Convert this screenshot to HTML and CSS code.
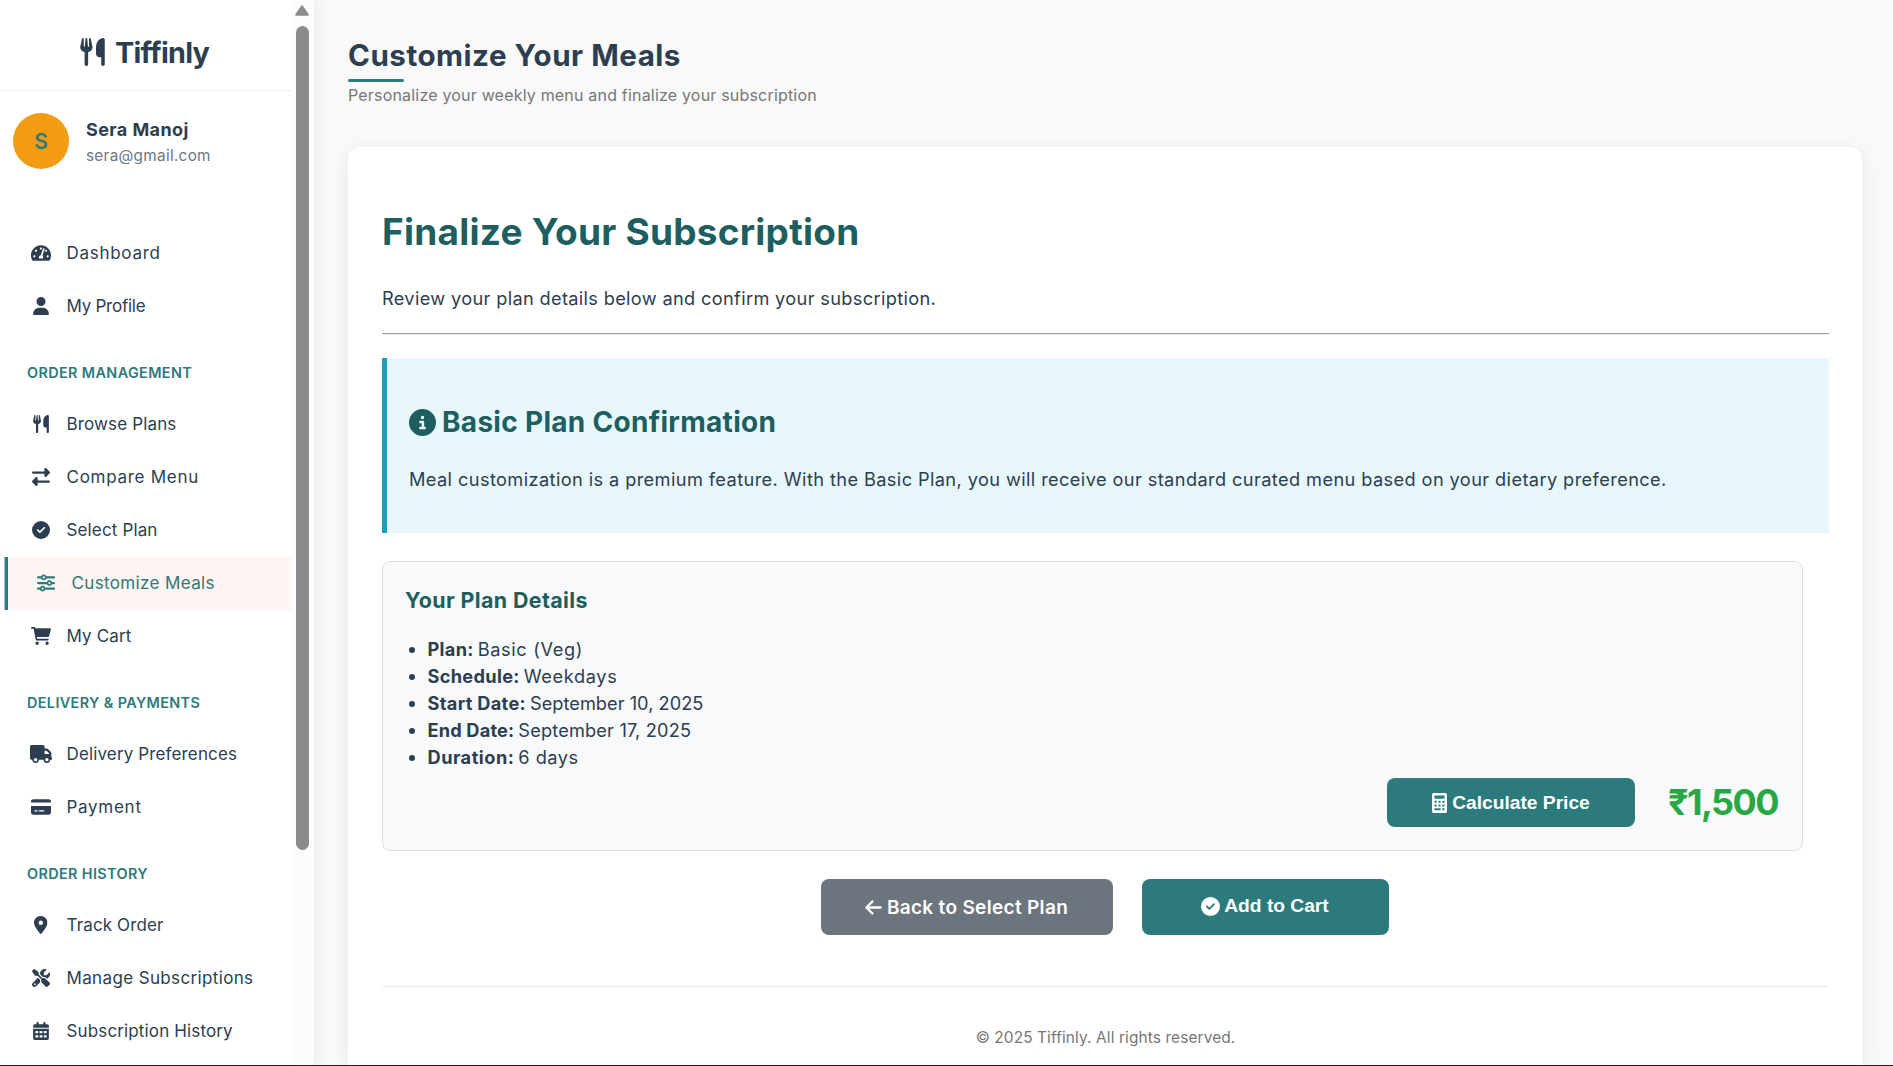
FILE: index.html
```html
<!DOCTYPE html>
<html lang="en">
<head>
<meta charset="utf-8">
<title>Customize Your Meals - Tiffinly</title>
<link rel="stylesheet" href="styles.css">
</head>
<body>
<svg class="sprite" aria-hidden="true">
  <symbol id="utensils" viewBox="0 0 448 512"><path d="M416 0C400 0 288 32 288 176V288c0 35.3 28.7 64 64 64h32V480c0 17.7 14.3 32 32 32s32-14.3 32-32V352 240 32c0-17.7-14.3-32-32-32zM64 16C64 7.8 57.9 1 49.7 .1S34.2 4.6 32.4 12.5L2.1 148.8C.7 155.1 0 161.5 0 167.9c0 45.9 35.1 83.6 80 87.7V480c0 17.7 14.3 32 32 32s32-14.3 32-32V255.6c44.9-4.1 80-41.8 80-87.7c0-6.4-.7-12.8-2.1-19.1L191.6 12.5c-1.8-8-9.3-13.3-17.4-12.4S160 7.8 160 16V150.2c0 5.4-4.4 9.8-9.8 9.8c-5.1 0-9.3-3.9-9.8-9L127.9 14.6C127.2 6.3 120.3 0 112 0s-15.2 6.3-15.9 14.6L83.7 151c-.5 5.1-4.7 9-9.8 9c-5.4 0-9.8-4.4-9.8-9.8V16z"/></symbol>
  <symbol id="gauge" viewBox="0 0 576 512"><path d="M288 32C128.94 32 0 160.94 0 320c0 52.8 14.25 102.26 39.06 144.8 5.61 9.62 16.3 15.2 27.44 15.2h443c11.14 0 21.83-5.58 27.44-15.2C561.75 422.26 576 372.8 576 320c0-159.06-128.94-288-288-288zm0 64c14.71 0 26.58 10.13 30.32 23.65-1.11 2.26-2.64 4.23-3.45 6.67l-9.22 27.67c-5.13 3.49-10.97 6.01-17.64 6.01-17.67 0-32-14.33-32-32S270.33 96 288 96zM96 384c-17.67 0-32-14.33-32-32s14.33-32 32-32 32 14.33 32 32-14.33 32-32 32zm48-160c-17.67 0-32-14.33-32-32s14.33-32 32-32 32 14.33 32 32-14.33 32-32 32zm246.77-72.41l-61.33 184C343.13 347.33 352 364.54 352 384c0 11.72-3.38 22.55-8.88 32H232.88c-5.5-9.45-8.88-20.28-8.88-32 0-33.94 26.5-61.43 59.9-63.59l61.34-184.01c4.17-12.56 17.73-19.45 30.36-15.17 12.57 4.19 19.35 17.79 15.17 30.36zm14.66 57.2l15.52-46.55c3.47-1.29 7.13-2.23 11.05-2.23 17.67 0 32 14.33 32 32s-14.33 32-32 32c-11.38-.01-20.89-6.28-26.57-15.22zM480 384c-17.67 0-32-14.33-32-32s14.33-32 32-32 32 14.33 32 32-14.33 32-32 32z"/></symbol>
  <symbol id="user" viewBox="0 0 448 512"><path d="M224 256A128 128 0 1 0 224 0a128 128 0 1 0 0 256zm-45.7 48C79.8 304 0 383.8 0 482.3C0 498.7 13.3 512 29.7 512H418.3c16.4 0 29.7-13.3 29.7-29.7C448 383.8 368.2 304 269.7 304H178.3z"/></symbol>
  <symbol id="exchange" viewBox="0 0 512 512"><path d="M32 96l320 0V32c0-12.9 7.8-24.6 19.8-29.6s25.7-2.2 34.9 6.9l96 96c6 6 9.4 14.1 9.4 22.6s-3.4 16.6-9.4 22.6l-96 96c-9.2 9.2-22.9 11.9-34.9 6.9s-19.8-16.6-19.8-29.6V160L32 160c-17.7 0-32-14.3-32-32s14.3-32 32-32zM480 352c17.7 0 32 14.3 32 32s-14.3 32-32 32H160v64c0 12.9-7.8 24.6-19.8 29.6s-25.7 2.2-34.9-6.9l-96-96c-6-6-9.4-14.1-9.4-22.6s3.4-16.6 9.4-22.6l96-96c9.2-9.2 22.9-11.9 34.9-6.9s19.8 16.6 19.8 29.6l0 64H480z"/></symbol>
  <symbol id="check" viewBox="0 0 512 512"><path d="M256 512A256 256 0 1 0 256 0a256 256 0 1 0 0 512zM369 209L241 337c-9.4 9.4-24.6 9.4-33.9 0l-64-64c-9.4-9.4-9.4-24.6 0-33.9s24.6-9.4 33.9 0l47 47L335 175c9.4-9.4 24.6-9.4 33.9 0s9.4 24.6 0 33.9z"/></symbol>
  <symbol id="sliders" viewBox="0 0 512 512"><path d="M0 416c0 17.7 14.3 32 32 32l54.7 0c12.3 28.3 40.5 48 73.3 48s61-19.7 73.3-48L480 448c17.7 0 32-14.3 32-32s-14.3-32-32-32l-246.7 0c-12.3-28.3-40.5-48-73.3-48s-61 19.7-73.3 48L32 384c-17.7 0-32 14.3-32 32zm128 0a32 32 0 1 1 64 0 32 32 0 1 1 -64 0zM320 256a32 32 0 1 1 64 0 32 32 0 1 1 -64 0zm32-80c-32.8 0-61 19.7-73.3 48L32 224c-17.7 0-32 14.3-32 32s14.3 32 32 32l246.7 0c12.3 28.3 40.5 48 73.3 48s61-19.7 73.3-48l54.7 0c17.7 0 32-14.3 32-32s-14.3-32-32-32l-54.7 0c-12.3-28.3-40.5-48-73.3-48zM192 128a32 32 0 1 1 0-64 32 32 0 1 1 0 64zm73.3-64C253 35.7 224.8 16 192 16s-61 19.7-73.3 48L32 64C14.3 64 0 78.3 0 96s14.3 32 32 32l86.7 0c12.3 28.3 40.5 48 73.3 48s61-19.7 73.3-48L480 128c17.7 0 32-14.3 32-32s-14.3-32-32-32L265.3 64z"/></symbol>
  <symbol id="cart" viewBox="0 0 576 512"><path d="M0 24C0 10.7 10.7 0 24 0H96c11.5 0 21.4 8.2 23.6 19.5L122 32H541.8c21.2 0 36.5 20.3 30.8 40.7l-53.6 192c-3.9 13.8-16.4 23.3-30.8 23.3H170.7l9.2 48H488c13.3 0 24 10.7 24 24s-10.7 24-24 24H160c-11.5 0-21.4-8.2-23.6-19.5L76.1 48H24C10.7 48 0 37.3 0 24zM128 464a48 48 0 1 1 96 0 48 48 0 1 1 -96 0zm336-48a48 48 0 1 1 0 96 48 48 0 1 1 0-96z"/></symbol>
  <symbol id="truck" viewBox="0 0 640 512"><path d="M48 0C21.5 0 0 21.5 0 48V368c0 26.5 21.5 48 48 48H64c0 53 43 96 96 96s96-43 96-96H384c0 53 43 96 96 96s96-43 96-96h32c17.7 0 32-14.3 32-32s-14.3-32-32-32V288 256 237.3c0-17-6.7-33.3-18.7-45.3L512 114.7c-12-12-28.3-18.7-45.3-18.7H416V48c0-26.5-21.5-48-48-48H48zM416 160h50.7L544 237.3V256H416V160zM112 416a48 48 0 1 1 96 0 48 48 0 1 1 -96 0zm368-48a48 48 0 1 1 0 96 48 48 0 1 1 0-96z"/></symbol>
  <symbol id="card" viewBox="0 0 576 512"><path d="M64 32C28.7 32 0 60.7 0 96v32H576V96c0-35.3-28.7-64-64-64H64zM576 224H0V416c0 35.3 28.7 64 64 64H512c35.3 0 64-28.7 64-64V224zM112 352h64c8.8 0 16 7.2 16 16s-7.2 16-16 16H112c-8.8 0-16-7.2-16-16s7.2-16 16-16zm112 16c0-8.8 7.2-16 16-16H368c8.8 0 16 7.2 16 16s-7.2 16-16 16H240c-8.8 0-16-7.2-16-16z"/></symbol>
  <symbol id="pin" viewBox="0 0 384 512"><path d="M215.7 499.2C267 435 384 279.4 384 192C384 86 298 0 192 0S0 86 0 192c0 87.4 117 243 168.3 307.2c12.3 15.3 35.1 15.3 47.4 0zM192 128a64 64 0 1 1 0 128 64 64 0 1 1 0-128z"/></symbol>
  <symbol id="tools" viewBox="0 0 512 512"><path d="M78.6 5C69.1-2.4 55.6-1.5 47 7L7 47c-8.5 8.5-9.4 22-2.1 31.6l80 104c4.5 5.9 11.6 9.4 19 9.4h54.1l109 109c-14.7 29-10 65.4 14.3 89.6l112 112c12.5 12.5 32.8 12.5 45.3 0l64-64c12.5-12.5 12.5-32.8 0-45.3l-112-112c-24.2-24.2-60.6-29-89.6-14.3l-109-109V104c0-7.5-3.5-14.5-9.4-19L78.6 5zM19.9 396.1C7.2 408.8 0 426.1 0 444.1C0 481.6 30.4 512 67.9 512c18 0 35.3-7.2 48-19.9L233.7 374.3c-7.8-20.9-9-43.6-3.6-65.1l-61.7-61.7L19.9 396.1zM512 144c0-10.5-1.1-20.7-3.2-30.5c-2.4-11.2-16.1-14.1-24.2-6l-63.9 63.9c-3 3-7.1 4.7-11.3 4.7H352c-8.8 0-16-7.2-16-16V102.6c0-4.2 1.7-8.3 4.7-11.3l63.9-63.9c8.1-8.1 5.2-21.8-6-24.2C388.7 1.1 378.5 0 368 0C288.5 0 224 64.5 224 144l0 .8 85.3 85.3c36-9.1 75.8 .5 104 28.7L429 274.5c49-23 83-72.8 83-130.5zM56 432a24 24 0 1 1 48 0 24 24 0 1 1 -48 0z"/></symbol>
  <symbol id="calendar" viewBox="0 0 448 512"><path fill-rule="evenodd" d="M128 0c17.7 0 32 14.3 32 32V64H288V32c0-17.7 14.3-32 32-32s32 14.3 32 32V64h48c26.5 0 48 21.5 48 48v48H0V112C0 85.5 21.5 64 48 64H96V32c0-17.7 14.3-32 32-32zM0 192H448V464c0 26.5-21.5 48-48 48H48c-26.5 0-48-21.5-48-48V192zM64 256v64h80v-64zM184 256v64h80v-64zM304 256v64h80v-64zM64 376v64h80v-64zM184 376v64h80v-64zM304 376v64h80v-64z"/></symbol>
  <symbol id="info" viewBox="0 0 512 512"><path d="M256 512A256 256 0 1 0 256 0a256 256 0 1 0 0 512zM216 336h24V272H216c-13.3 0-24-10.7-24-24s10.7-24 24-24h48c13.3 0 24 10.7 24 24v88h8c13.3 0 24 10.7 24 24s-10.7 24-24 24H216c-13.3 0-24-10.7-24-24s10.7-24 24-24zm40-208a32 32 0 1 1 0 64 32 32 0 1 1 0-64z"/></symbol>
  <symbol id="calculator" viewBox="0 0 384 512"><path fill-rule="evenodd" d="M48 0H336a48 48 0 0 1 48 48V464a48 48 0 0 1-48 48H48a48 48 0 0 1-48-48V48a48 48 0 0 1 48-48zM64 64v80H320V64zM64 196v52h56v-52zM164 196v52h56v-52zM264 196v52h56v-52zM64 292v52h56v-52zM164 292v52h56v-52zM264 292v52h56v-52zM64 388v52h156v-52zM264 388v52h56v-52z"/></symbol>
  <symbol id="arrow-left" viewBox="0 0 448 512"><path d="M9.4 233.4c-12.5 12.5-12.5 32.8 0 45.3l160 160c12.5 12.5 32.8 12.5 45.3 0s12.5-32.8 0-45.3L109.2 288 416 288c17.7 0 32-14.3 32-32s-14.3-32-32-32l-306.7 0L214.6 118.6c12.5-12.5 12.5-32.8 0-45.3s-32.8-12.5-45.3 0l-160 160z"/></symbol>
</svg>

<div class="layout">
  <aside class="sidebar">
    <div class="sidebar-content">
      <div class="brand"><svg class="brand-icon"><use href="#utensils"/></svg><span>Tiffinly</span></div>
      <div class="profile">
        <div class="avatar">S</div>
        <div class="profile-text">
          <div class="profile-name">Sera Manoj</div>
          <div class="profile-email">sera@gmail.com</div>
        </div>
      </div>
      <nav>
        <a class="nav-item wider"><span class="nav-icon"><svg class="w576"><use href="#gauge"/></svg></span>Dashboard</a>
        <a class="nav-item tight"><span class="nav-icon"><svg class="w448"><use href="#user"/></svg></span>My Profile</a>
        <div class="nav-title">ORDER MANAGEMENT</div>
        <a class="nav-item"><span class="nav-icon"><svg class="w448"><use href="#utensils"/></svg></span>Browse Plans</a>
        <a class="nav-item wider"><span class="nav-icon"><svg><use href="#exchange"/></svg></span>Compare Menu</a>
        <a class="nav-item"><span class="nav-icon"><svg><use href="#check"/></svg></span>Select Plan</a>
        <a class="nav-item wide active"><span class="nav-icon"><svg><use href="#sliders"/></svg></span>Customize Meals</a>
        <a class="nav-item"><span class="nav-icon"><svg class="w576"><use href="#cart"/></svg></span>My Cart</a>
        <div class="nav-title">DELIVERY &amp; PAYMENTS</div>
        <a class="nav-item"><span class="nav-icon"><svg class="w640"><use href="#truck"/></svg></span>Delivery Preferences</a>
        <a class="nav-item wider"><span class="nav-icon"><svg class="w576"><use href="#card"/></svg></span>Payment</a>
        <div class="nav-title">ORDER HISTORY</div>
        <a class="nav-item"><span class="nav-icon"><svg class="w384"><use href="#pin"/></svg></span>Track Order</a>
        <a class="nav-item wide"><span class="nav-icon"><svg><use href="#tools"/></svg></span>Manage Subscriptions</a>
        <a class="nav-item"><span class="nav-icon"><svg class="w448"><use href="#calendar"/></svg></span>Subscription History</a>
      </nav>
    </div>
    <div class="scrollbar">
      <svg class="scroll-arrow" viewBox="0 0 14 11"><path d="M7 1.2 12.8 9.8H1.2z"/></svg>
      <div class="scroll-thumb"></div>
    </div>
  </aside>

  <main class="main">
    <header class="page-header">
      <h1>Customize Your Meals</h1>
      <p>Personalize your weekly menu and finalize your subscription</p>
    </header>
    <section class="card">
      <h2 class="card-title">Finalize Your Subscription</h2>
      <p class="lead">Review your plan details below and confirm your subscription.</p>
      <hr>
      <div class="notice">
        <h3><svg><use href="#info"/></svg>Basic Plan Confirmation</h3>
        <p>Meal customization is a premium feature. With the Basic Plan, you will receive our standard curated menu based on your dietary preference.</p>
      </div>
      <div class="plan">
        <h4>Your Plan Details</h4>
        <ul>
          <li><strong>Plan:</strong><span class="wider">Basic (Veg)</span></li>
          <li><strong>Schedule:</strong><span class="wider">Weekdays</span></li>
          <li><strong>Start Date:</strong><span class="tighter">September 10, 2025</span></li>
          <li><strong class="tight">End Date:</strong><span>September 17, 2025</span></li>
          <li><strong class="wide">Duration:</strong><span class="wide">6 days</span></li>
        </ul>
        <div class="price-row">
          <button class="btn btn-calc"><svg class="w384"><use href="#calculator"/></svg>Calculate Price</button>
          <span class="price">₹1,500</span>
        </div>
      </div>
      <div class="actions">
        <a class="btn btn-back"><svg class="w448"><use href="#arrow-left"/></svg>Back to Select Plan</a>
        <button class="btn btn-cart"><svg><use href="#check"/></svg>Add to Cart</button>
      </div>
      <footer>© 2025 Tiffinly. All rights reserved.</footer>
    </section>
  </main>
</div>
</body>
</html>
```
FILE: styles.css
```css
* { box-sizing: border-box; margin: 0; padding: 0; }
html, body { height: 100%; overflow: hidden; }
body { font-family: Inter, "Open Sans", sans-serif; color: #2c3e50; background: #f9f9f9; }
svg { fill: currentColor; flex: none; display: block; }
.sprite { display: none; }

.layout { display: flex; height: 1066px; border-bottom: 1px solid #1f1f1f; }

/* Sidebar */
.sidebar { display: flex; flex: none; width: 314px; background: #fff; box-shadow: 3px 0 12px rgba(0, 0, 0, .06); position: relative; }
.sidebar-content { width: 291px; overflow: hidden; }
.brand { display: flex; align-items: center; gap: 10px; height: 91px; padding: 14px 0 0 80px; border-bottom: 1px solid #eee; font-size: 28.8px; font-weight: 700; letter-spacing: -.75px; }
.brand-icon { width: 25px; height: 28px; }
.profile { display: flex; align-items: center; gap: 17px; height: 136px; padding: 0 0 36px 13px; }
.profile-text { padding-top: 2px; }
.avatar { display: flex; align-items: center; justify-content: center; width: 56px; height: 56px; border-radius: 50%; background: #f39c12; color: #2c7a7b; font-size: 21px; font-weight: 600; }
.profile-name { font-size: 18px; font-weight: 700; line-height: 27px; letter-spacing: .42px; }
.profile-email { font-size: 15.3px; line-height: 25px; letter-spacing: .3px; color: #6b7785; }
.nav-item { display: flex; align-items: center; height: 53px; padding: 0 0 2px 26.5px; font-size: 17px; letter-spacing: .14px; white-space: nowrap; }
.nav-item.tight { letter-spacing: -.26px; }
.nav-item.wide { letter-spacing: .36px; }
.nav-item.wider { letter-spacing: .72px; }
.nav-item.active { margin-left: 4px; border-left: 1px solid #a9cacb; box-shadow: inset 3px 0 #2c7a7b; background: #fff5f2; color: #2c7a7b; }
.nav-icon { display: flex; justify-content: center; width: 29px; margin-right: 11px; }
.nav-icon svg { width: 18px; height: 18px; }
.nav-icon .w384 { width: 13.5px; }
.nav-icon .w448 { width: 16px; }
.nav-icon .w576 { width: 20px; }
.nav-icon .w640 { width: 22.5px; }
.nav-title { margin: 29px 0 15px; padding-left: 27px; font-size: 14.4px; font-weight: 600; line-height: 21px; letter-spacing: .38px; color: #2c7a7b; }
.scrollbar { display: flex; flex-direction: column; align-items: center; width: 23px; padding: 5px 1px 0 0; background: #fcfcfc; }
.scroll-arrow { width: 14px; height: 11px; fill: #8b8b8b; stroke: #8b8b8b; stroke-width: 2; stroke-linejoin: round; }
.scroll-thumb { width: 13px; height: 824px; margin-top: 10px; border-radius: 7px; background: #8b8b8b; }

/* Main column */
.main { display: flex; flex-direction: column; flex: 1; padding: 34px 31px 0 34px; }
.page-header { height: 113px; }
.page-header h1 { height: 49px; font-size: 29.6px; line-height: 42px; letter-spacing: .5px; }
.page-header h1::after { content: ""; display: block; width: 56px; height: 3px; margin-top: 3px; border-radius: 2px; background: #2c7a7b; }
.page-header p { font-size: 16px; line-height: 24px; letter-spacing: .19px; color: #777; }
.card { flex: 1; padding: 0 33px 0 34px; border-radius: 12px 12px 0 0; background: #fff; box-shadow: 0 4px 20px rgba(0, 0, 0, .08); }
.card-title { margin-top: 58px; font-size: 37px; line-height: 54px; letter-spacing: .24px; color: #1d5f60; }
.lead { margin-top: 25px; font-size: 18.2px; line-height: 28px; letter-spacing: .34px; }
hr { height: 2px; margin-top: 21px; border: 0; border-top: 1px solid #9a9a9a; border-bottom: 1px solid #f3f3f3; }
.notice { height: 175px; margin-top: 23px; padding: 42px 22px 0; border-left: 5px solid #17a2b8; background: #e8f7fb; }
.notice h3 { display: flex; align-items: center; gap: 6px; font-size: 28px; line-height: 44px; letter-spacing: .3px; color: #1d5f60; }
.notice h3 svg { width: 27px; height: 27px; }
.notice p { margin-top: 21px; font-size: 18.2px; line-height: 28px; letter-spacing: .4px; white-space: nowrap; }
.plan { height: 290px; margin: 28px 26px 0 0; padding: 21px 22px 0; border: 1px solid #dcdfe2; border-radius: 8px; background: #f8f9fb; }
.plan h4 { font-size: 21.4px; line-height: 34px; letter-spacing: .4px; color: #1d5f60; }
.plan ul { margin-top: 19px; padding-left: 23px; font-size: 18.2px; line-height: 27px; list-style: none; letter-spacing: .16px; }
.plan li { display: flex; align-items: center; gap: 4px; }
.plan li::before { content: ""; width: 6px; height: 6px; margin: 0 9px 0 -19.5px; border-radius: 50%; background: #2c3e50; }
.plan li strong { letter-spacing: .31px; }
.plan li .tighter { letter-spacing: .03px; }
.plan li .tight { letter-spacing: .18px; }
.plan li .wider { letter-spacing: .63px; }
.plan li .wide { letter-spacing: .5px; }
.price-row { display: flex; align-items: center; justify-content: flex-end; gap: 33px; margin-top: 7px; }
.price { width: 112px; padding-bottom: 2px; font-size: 36px; line-height: 46px; font-weight: 700; letter-spacing: -1.6px; color: #28a745; }
.btn { display: flex; align-items: center; justify-content: center; gap: 5px; border: 0; border-radius: 8px; background: #2c7a7b; color: #fff; font: 700 19.2px "Liberation Sans", Arial, sans-serif; white-space: nowrap; }
.btn svg { width: 19px; height: 19px; }
.btn .w384 { width: 15px; height: 20px; }
.btn .w448 { width: 17px; }
.btn-calc { width: 248px; height: 49px; }
.actions { display: flex; justify-content: center; gap: 29px; margin: 28px 2px 0 0; }
.actions .btn { height: 56px; }
.actions .btn-back { width: 292px; background: #6c757d; font: 600 19px Inter, sans-serif; letter-spacing: .32px; }
.actions .btn-cart { width: 247px; padding-bottom: 2px; gap: 4px; }
footer { margin-top: 51px; padding-top: 38px; border-top: 1px solid #ebebeb; font-size: 15.4px; line-height: 26px; letter-spacing: .12px; text-align: center; color: #777; }
```
